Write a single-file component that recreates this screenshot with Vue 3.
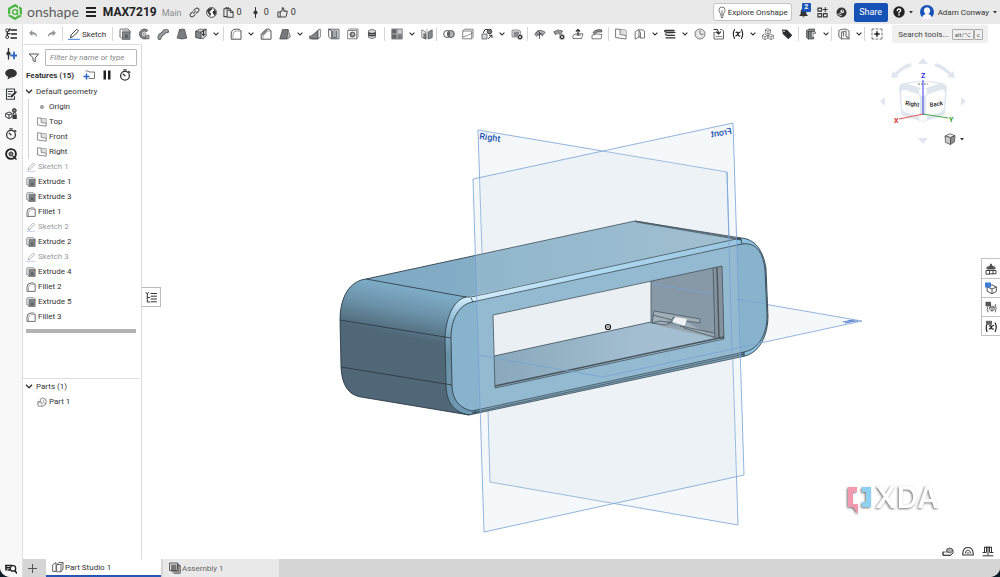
<script setup>
import { h, ref } from 'vue'

const dark = '#3a3d40'
const grey = '#6b6e71'

const s = (d, stroke = dark, w = 1, extra = {}) => ['path', { d, fill: 'none', stroke, 'stroke-width': w, 'stroke-linejoin': 'round', 'stroke-linecap': 'round', ...extra }]
const f = (d, fill = dark, stroke = 'none') => ['path', { d, fill, stroke, 'stroke-width': 0.7 }]
const c = (cx, cy, r, fill = 'none', stroke = dark, w = 1) => ['circle', { cx, cy, r, fill, stroke, 'stroke-width': w }]

const fx = s('M2.5 1.5Q.2 6 2.5 10.5M9.5 1.5Q11.8 6 9.5 10.5', '#222', 1.1)
const ex = s('M4 4.4Q5.5 3.4 6 6T8 8M8.3 4Q6.5 4.5 5.8 6T3.8 8', '#222', 1.2)
const miniDelete = [c(9, 9, 2.8, '#333', '#fff', 0.5), s('M8 8L10 10M10 8L8 10', '#fff', 0.7)]

const icons = {
  tree: [c(2.2, 2.3, 1.5), c(2.2, 9, 1.5), s('M2.2 4V7.5M2.5 5.7H5M6 2H11.5M6.5 6H11.5M6 10H11.5M5 .8L3.8 3', '#222', 1.3)],
  insertVersion: [s('M3.5 0V11', '#333', 1.3), c(3.5, 5.5, 1.7, '#333'), s('M9 4.5V10.5M6 7.5H12', '#2f66c4', 1.8)],
  comment: [f('M6 1C9 1 11.8 2.7 11.8 5.2S9 9.4 6 9.4L2.5 11.5 3.2 8.8C1.5 8 .2 6.8 .2 5.2.2 2.7 3 1 6 1Z', '#333')],
  notes: [s('M9.5 3.5V1H1.5V11.3H9.5V8.5M3.2 3.5H7.5M3.2 6H6M3.2 8.5H5', dark, 1.1), s('M6.5 8.5L10.8 4.2', '#222', 1.8)],
  config: [s('M1 5.5L4 4L7 5.5V9L4 10.5L1 9ZM1 5.5L4 7L7 5.5M4 7V10.5'), c(9.3, 2.5, 1.9, '#777', '#333'), f('M7.5 6.5H11.8V11H7.5Z'), s('M8.5 6V5Q9.6 4 10.8 5V6')],
  timer: [c(6, 6.7, 4.4, 'none', '#333', 1.3), s('M6 6.8L4.2 5.2M4.8 .8H7.2M9.8 2.4L10.8 3.3', '#333', 1.3)],
  target: [c(6, 6, 4.9, '#fff', '#222', 1.9), c(6, 6, 2.1, '#777', '#333'), s('M8.5 8.5L11 11', '#222', 1.6)],
  inspect: [s('M.6 3.5H7M1 5.8H4.5M1 3.5V8M3 8H5', '#222', 1.6), c(8, 6.4, 2.7, '#fff', '#222', 1.3), s('M10 8.8L11.6 11', '#222', 1.6)],
  undo: [f('M2 5L5.3 2V4.1C8.5 4.2 10.2 6 10.2 9.5C9 7.3 7.5 6.3 5.3 6.2V8.2Z', '#94979a')],
  redo: [f('M10 5L6.7 2V4.1C3.5 4.2 1.8 6 1.8 9.5C3 7.3 4.5 6.3 6.7 6.2V8.2Z', '#94979a')],
  pencil: [s('M2.5 9.3L3.3 6.7L8.8 1.2L10.6 3L5 8.5Z'), s('M.5 11.3H11.5', '#3c79d8')],
  sketch: [s('M2.5 9.3L3.3 6.7L8.8 1.2L10.6 3L5 8.5Z', '#a5a7aa'), s('M1 11.3H10.5', '#b7cdf0')],
  extrude: [s('M1 8.5V2Q1 1 2 1H9L11 3', grey), s('M1 8.5L3.5 11', grey), f('M3.5 4H11V11.4H3.5Z', '#85888b', '#555'), s('M3.5 3H11V4.5', grey), f('M5.8 6.5H8.8V10H5.8Z', '#5c5f62')],
  revolve: [f('M9.8 2.3A5 5 0 1 0 9.8 9.7L8.2 8A2.8 2.8 0 1 1 8.2 4Z', '#85888b', '#444'), c(6.3, 6, 1.2, 'none', '#666', 0.8), f('M7.8 7.3H11V10.8H7.8Z', '#a6a8ab', '#555')],
  sweep: [s('M2.5 10C2.5 5 6.5 7.5 7.5 3.2H10', '#4f5254', 4), s('M2.5 10C2.5 5 6.5 7.5 7.5 3.2H10', '#9a9da0', 2.4)],
  loft: [f('M3.5 1.5H8.5L10.8 10Q6 12 1.2 10Z', '#7b7e81', '#444'), f('M3.5 1.5Q6 .5 8.5 1.5Q6 3 3.5 1.5Z', '#bbb', '#555')],
  thicken: [f('M.8 3L4.5 1.2H11.2V8L8 10.8L.8 9.5Z', '#c5c7c9', '#444'), f('M.8 3.3L6 4.2V10.6L.8 9.5Z', '#85888b', '#444'), s('M8.5 3V7.5M7 6L8.5 7.5 10 6M6 4.2L11 1.5', '#333')],
  fillet: [s('M1.2 10.8V6Q1.2 1.2 6 1.2H9L11 3V10.8Z', '#555'), s('M3 10.8V6.8Q3 3 6.8 3H11', '#888', 0.8)],
  chamfer: [s('M1.2 10.8V6.2L6 1.2H9.5L11 3V10.8Z', '#555'), f('M1.2 6.2L6 1.2 7.6 2.8 3 7.8Z', '#85888b'), s('M3 10.8V7.8L7.6 3H11', '#888', 0.8)],
  draft: [f('M3.5 1.5H9L8 11H.8Z', '#777a7d', '#444'), f('M9 1.5L11.4 9 8 11Z', '#bcbec0', '#555')],
  rib: [f('M.8 9L9 2.5V10.8H3Z', '#828588', '#444'), f('M9 2L11.3 1.2V9L9 10.8Z', '#fff', '#444'), s('M.8 8V10.8H9', '#555')],
  shell: [s('M1 1.2H11V10.8H3L1 9Z', '#666'), f('M3 2.5H9.5V10.8H3Z', '#74777a'), f('M5 2.5H8V9H5Z', '#a5a8ab'), s('M1 1.2L3 2.5')],
  hole: [s('M1 2.5L2.5 1H11V9.5L9.7 10.8H1ZM1 2.5H9.7V10.8', '#777', 0.9), c(5.5, 6.6, 2.5, '#888', '#555'), c(6, 6, 0.9, '#ccc', 'none')],
  thread: [f('M2.5 2.5Q6 .2 9.5 2.5V9.5Q6 11.8 2.5 9.5Z', '#d4d6d8', '#555'), s('M2.7 5Q6 6.4 9.3 5M2.7 7Q6 8.4 9.3 7', '#444', 1.6)],
  pattern: [f('M.8 1H11.2V11H.8Z', '#a5a8aa', '#555'), f('M1.2 1.4H5.3V5.3H1.2ZM1.2 6.6H5.3V10.6H1.2Z', '#606366'), f('M6.8 6.6H10.8V10.6H6.8Z', '#77797c'), f('M6.8 1.6H10.8V5.3H6.8Z', '#c7c9cb')],
  mirror: [f('M.8 1.8L4.8 4V11L.8 9.5Z', '#f4f4f4', '#555'), f('M7.2 4L11.2 1.8V9.5L7.2 11Z', '#8a8d90', '#444'), s('M6 1V11', '#999', 0.8), f('M2.8 5.5L4.8 6.5V11L2.8 10Z', '#888', '#555')],
  boolean: [c(4.2, 6, 3.5, '#fff', '#555'), c(7.8, 6, 3.5, '#aeb0b3', '#555'), f('M6 3Q8 6 6 9Q4 6 6 3Z', '#555')],
  split: [s('M1 3L2.5 1.2H11V9.3L9.7 10.8H1ZM1 3H9.7V10.8', '#777', 0.9), s('M1.5 8.8Q5 8.5 10.5 4.8', '#777', 0.8)],
  transform: [f('M1 6H6V11H1Z', '#d8d9db', '#444'), s('M2.5 4.5L4 1.5H7', '#333'), c(8.5, 3.5, 2.3, '#777', '#444'), s('M7.5 10.5L11 7.3M8.5 7.3H11V9.5', '#333')],
  deleteFace: [f('M1 2H7.5L9.5 3V9H1Z', '#cfd1d3', '#777'), f('M2.8 3.8H8V9H2.8Z', '#85888b'), ...miniDelete],
  moveFace: [f('M.8 6.5Q4 -.5 11.2 4.2L9 7Q6 3.8 2.8 8.5Z', '#aaacaf', '#555'), s('M4 3L7.5 7M5.5 5V10.5M5.5 5L8.8 8.2M2.5 4.6L4.5 7', '#444', 0.9)],
  deleteSurf: [f('M.8 3.8Q5 .5 9.5 3L7.8 7Q4 4.5 2.5 6.8Z', '#85888b', '#555'), s('M3 3.4L6 6M6 2.4L8.5 5', '#ddd', 0.6), ...miniDelete],
  exportFace: [f('M1 7.5L3.5 5.8H11L9.5 10.5H1Z', '#fff', '#444'), f('M2.5 7.2L4.5 6.2H9.5L8 8Z', '#999'), s('M6 7V1.5M4.2 3.2L6 1.5 7.8 3.2', '#333', 1.2)],
  offset: [f('M1 7.2Q5 5 11 6.5L10 10.8H1Z', '#fff', '#444'), f('M1.8 4.6Q5 .8 10.5 1.8L11 4Q6 3 3.5 5.8Z', '#85888b', '#444')],
  plane: [s('M1 1L11 2.2V11L1 9.6Z', '#777'), f('M5 1.6L11 2.3V7.6L5 6.6Z', '#dcdee0'), s('M5 1.6V6.6L11 7.5', '#777', 0.9)],
  surface: [s('M1.5 3.5L5 1.2V9L1.5 11Z', '#777'), s('M5.5 2Q10.5 1 10.5 4V10H6.5V5Q6.5 3 4.8 3.5', '#777'), s('M6.5 10Q5 10 5 8', '#777')],
  helix: [s('M1 2.5H10M1.5 2.5Q-.5 4 3 4.3H11M2 6Q1 7.3 4 7.3H10.5M2 9.8H11', '#333', 1.3), s('M1 5.8H9', '#999', 0.8)],
  clock: [c(6, 6, 5, '#f4f4f4', '#777'), s('M6 3V6.2H9', '#666'), c(6, 6, 3.4, 'none', '#bbb', 0.6)],
  derive: [s('M1 4.5V11H10.5V3L9 1.5H7.5', '#666'), s('M1 1.5H4Q5 1.5 5.5 5.5M3.5 4L5.5 6 7.5 4', '#333', 1.2), s('M3 8.5H9M1 4.5H2.5', '#888')],
  variable: [fx, ex],
  cubes: [s('M6 .8L8.5 2V4.8L6 6L3.5 4.8V2ZM3 6.2L5.7 7.5V10.3L3 11.5.5 10.3V7.5ZM9 6.2L11.5 7.5V10.3L9 11.5 6.3 10.3V7.5ZM3.5 2L6 3.2 8.5 2M6 3.2V6M.5 7.5L3 8.7 5.7 7.5M3 8.7V11.5M6.3 7.5L9 8.7 11.5 7.5M9 8.7V11.5', '#666', 0.7)],
  tag: [f('M1 1.5L6 1.8 11.3 7.3 7.3 11.2 1.8 6Z', '#2c2e30'), c(3, 3.3, 0.8, '#fff', 'none')],
  sheet: [f('M1.5 2.5L4 1H9.5V3.5H6V9H8.5V11H3.5L1.5 9.5Z', '#85888b', '#444'), s('M3.5 3.5V11M3.5 3.5H6', '#444', 0.8), f('M6.5 4H10.5V5.5H8V9.5H6.5Z', '#fff', '#555')],
  flat: [s('M1.2 2.5L4 1.2H8.5L11 3V10.8H3.5L1.2 9Z', '#666'), s('M3.5 10.8V4L8 3V8L11 10.8M5.5 3.5V8', '#777', 1.2)],
  addTool: [s('M1 3V1H3M9 1H11V3M11 9V11H9M3 11H1V9M5 1H7M5 11H7M1 5V7M11 5V7', '#666', 0.9), s('M6 3.8V8.2M3.8 6H8.2', '#222', 1.5)],
  filter: [s('M1.5 2H10.5L7.2 6V10L5 8.7V6Z', '#555')],
  folder: [s('M3 2H5L6 3H11.5V9.5H6', '#666', 0.9), s('M3.5 5V10M1 7.5H6', '#2f66c4', 1.5)],
  pause: [f('M2.5 1.5H5V10.5H2.5ZM7 1.5H9.5V10.5H7Z', '#222')],
  origin: [c(6, 6, 2, '#aaa', '#999', 1)],
  part: [s('M1 8V5.5H4V2.5L6.5 1 10.8 3V8.5L7 11H2Z', '#777'), s('M4 5.5L6 7H1.3M6 7V10.5M8 3.5V7L10 8', '#888', 0.8)],
  studio: [s('M1 3.5L4 1.5V10.5H1ZM5 3.5L7 1.5H11V8L9 10.8H5ZM9 3.8V10.8M5 3.5H9L11 1.5', '#666')],
  assembly: [s('M1 1H8.5V8.5H1ZM8.5 2H9.8V9.8H3M9.8 3.5H11.2V11.2H5', '#555'), f('M2 2.5H7.5V8H2Z', '#777')],
  outline: [s('M1 1.5L2.3 3 3.6 1.5M2.3 3V11H4.5M2.3 6.5H4.5M6 2.5H11.5M6 5.2H11.5M6 8H11.5M6 10.8H11.5', '#333', 1)],
  link: [s('M5 7L7.2 4.8M5.2 3.8L7.4 1.7Q8.8 .6 10.2 1.9T10.3 4.6L8.2 6.7M6.8 8.2L4.7 10.3Q3.2 11.4 1.8 10.1T1.7 7.4L3.8 5.3', '#444', 1.1)],
  globe: [c(6, 6, 5.3, '#fff', '#333'), f('M1 4.2Q2.8 .8 6 1L7.2 2.6 5.2 3.4 4.8 5 3 5.3 5 6.6 5.6 8 4.2 10.2 3.2 8.2ZM8 1.6L10.6 4 11 7 9.2 9.5 8.2 7.5 7 6.3 7.8 4.4 9 4Z', '#333')],
  copy: [s('M4 10.5H1V1.8H8V3.3M3 1.8V.8H6V1.8M4.5 3.5H8.5L11 5.5V11.3H4.5Z', '#444', 1.1), s('M8 3.5V6H11', '#444')],
  version: [s('M6 .5V11.5', '#333', 1.1), c(6, 6, 1.8, '#333')],
  like: [s('M1 5.5H3.5V11H1ZM3.5 5.8L5.8 3.5V.9Q7.8 .6 7.5 4.5H10.3Q11.4 4.6 11 6L10 10Q9.6 11 8.5 11H3.5', '#444', 1.1)],
  bulb: [s('M4.5 8.5C4.5 6.5 3 6 3 3.8Q3 1 6 1T9 3.8C9 6 7.5 6.5 7.5 8.5ZM4.7 10H7.3M5.3 11.5H6.7M6 8V4.5', '#777')],
  bell: [f('M2 9C3 8 3 6.5 3 5Q3 2 6 1.5T9 5C9 6.5 9 8 10.5 9V9.8H1.5V9ZM4.5 10.3H7.5Q6 12.2 4.5 10.3Z', '#333')],
  apps: [s('M1 1.2H5V4.5H1ZM1 7.2H5V10.8H1ZM7 7.2H11V10.8H7ZM9 .6V5M6.8 2.8H11.2', '#333', 1.2)],
  learn: [c(6, 6, 5.4, '#333', 'none'), s('M2 8L5 7M3 10L6 9', '#e9e9e9', 1), c(6.8, 4.8, 2, '#e9e9e9', 'none'), c(7.2, 4.4, 0.8, '#333', 'none')],
  help: [c(6, 6, 5.7, '#222', 'none'), s('M4.3 4.7Q4.3 3 6 3T7.7 4.6Q7.7 5.4 6 6.3V7', '#fff', 1.3), c(6, 8.9, 0.8, '#fff', 'none')],
  massA: [f('M3 6L6 .8 9 6Z', '#555', '#333'), f('M2 6Q1 3.5 3.5 3.5L4 6ZM10 6Q11 3.5 8.5 3.5L8 6Z', '#888', '#444'), s('M1 10.8V7.5H4.5V10.8ZM4.5 7.5H8V10.8H4.5M8 7.5H11V10.8H8', '#444')],
  appearance: [s('M2.5 5L7 2.8 11.3 5V9.5L7 11.7 2.5 9.5ZM2.5 5L7 7 11.3 5M7 7V11.7', '#555'), f('M0 .5H6V5.5H0Z', '#3f7bd3')],
  configTable: [s('M2.5 6Q1.5 8 3 11M10.3 3.5Q12 7.5 10.3 11M5 6L7 5 9.2 6V8.7L7 10 5 8.7ZM5 6L7 7.2 9.2 6M7 7.2V10', '#555', 0.9), f('M.5 .8H6V5.3H.5Z', '#555')],
  varTable: [s('M2 4Q.5 8 2 11.5M10.2 3Q12.3 7 10.2 11.5', '#222', 1.2), s('M4.5 6Q6 5 6.4 7.3T8.3 9M8.5 5.5Q7 6 6.2 7.3T4.3 9', '#222', 1.3), f('M1 .8H7V4.8H1Z', '#666')],
  measure: [f('M1 7H6.5L11 5V8L8.5 10.3H1Z', '#fff', '#333'), s('M1 7V10.3H8.5L11 8', '#333'), f('M4.5 6.5Q4 3 7.5 3T11 6L8.5 8Z', '#aaa', '#333')],
  gauge: [s('M.8 10V8Q1.5 2.5 6 2.5T11.2 8V10Z', '#333', 1.1), s('M3.2 8Q4 5 6 5T8.8 8M5 8H7', '#444', 1)],
  balance: [s('M1 10.8H11M6 2V10M2.5 2.3H9.5M2.5 2.3V7.5M9.5 2.3V7.5M1 7.5H4M8 7.5H11M4.5 2V7M7.5 2V7', '#333', 1)],
  smallCube: [f('M6 .8L11 2.6 6.5 4.6 1 3Z', '#eee', '#444'), f('M1 3L6.5 4.6V11.5L1.5 9.4Z', '#c9c9c9', '#444'), f('M11 2.6L6.5 4.6V11.5L10.5 8.8Z', '#909090', '#444')],
}

const Icon = (props) =>
  h('svg', { class: 'icon', viewBox: '0 0 12 12', 'aria-hidden': 'true' }, icons[props.name].map(([tag, attrs]) => h(tag, attrs)))
Icon.props = ['name']

const Chevron = () =>
  h('svg', { class: 'chevron', viewBox: '0 0 6 4', 'aria-hidden': 'true' }, [h('path', { d: 'M.6 .6L3 3L5.4 .6', fill: 'none', stroke: '#333', 'stroke-width': 1.1 })])

const Caret = () => h('svg', { class: 'caret', viewBox: '0 0 4 3', 'aria-hidden': 'true' }, [h('path', { d: 'M0 0H4L2 2.6Z', fill: '#333' })])

const toolGroups = [
  ['extrude', 'revolve', 'sweep', 'loft', 'thicken', 'v'],
  ['fillet', 'v', 'chamfer', 'draft', 'v', 'rib', 'shell', 'hole', 'thread'],
  ['pattern', 'v', 'mirror'],
  ['boolean', 'split', 'transform', 'v', 'deleteFace'],
  ['moveFace', 'deleteSurf', 'exportFace', 'offset'],
  ['plane', 'surface', 'v', 'helix', 'v', 'clock', 'derive', 'variable', 'v', 'cubes', 'tag'],
  ['sheet', 'v'],
  ['flat', 'v'],
  ['addTool'],
]

const railItems = ['insertVersion', 'comment', 'notes', 'config', 'timer', 'target']
const geometry = [['origin', 'Origin'], ['plane', 'Top'], ['plane', 'Front'], ['plane', 'Right']]
const features = [
  ['sketch', 'Sketch 1'], ['extrude', 'Extrude 1'], ['extrude', 'Extrude 3'], ['fillet', 'Fillet 1'],
  ['sketch', 'Sketch 2'], ['extrude', 'Extrude 2'], ['sketch', 'Sketch 3'], ['extrude', 'Extrude 4'],
  ['fillet', 'Fillet 2'], ['extrude', 'Extrude 5'], ['fillet', 'Fillet 3'],
]
const sideTabs = ['massA', 'appearance', 'configTable', 'varTable']
const filterText = ref('')
const toolQuery = ref('')
</script>

<template>
  <div class="app">
    <header class="topbar">
      <svg class="logo" viewBox="0 0 16 16" aria-hidden="true">
        <path d="M8 1.3L13.8 4.6V11.4L8 14.7L2.2 11.4V4.6Z" fill="none" stroke="#45b53c" stroke-width="2.2" />
        <path d="M1 11.2L4.4 9.4M11.5 1.5V4.8M15 11.5L11.8 9.9" stroke="#e8e8e8" stroke-width="1" />
        <circle cx="8" cy="8" r="2.4" fill="none" stroke="#45b53c" stroke-width="1.3" />
        <path d="M10.5 5.5V11.5" stroke="#45b53c" stroke-width="1.2" />
      </svg>
      <span class="brand">onshape</span>
      <button class="burger" aria-label="Menu"><i></i><i></i><i></i></button>
      <h1>MAX7219</h1>
      <span class="branch">Main</span>
      <button class="head-btn" aria-label="Copy link"><Icon name="link" /></button>
      <button class="head-btn" aria-label="Public document"><Icon name="globe" /></button>
      <button class="count" aria-label="Copies"><Icon name="copy" /><span>0</span></button>
      <button class="count" aria-label="Versions"><Icon name="version" /><span>0</span></button>
      <button class="count" aria-label="Likes"><Icon name="like" /><span>0</span></button>
      <div class="account">
        <button class="explore"><Icon name="bulb" />Explore Onshape</button>
        <button class="head-btn bell" aria-label="Notifications"><Icon name="bell" /><span class="badge">2</span></button>
        <button class="head-btn" aria-label="Apps"><Icon name="apps" /></button>
        <button class="head-btn" aria-label="Learning"><Icon name="learn" /></button>
        <button class="share">Share</button>
        <button class="help" aria-label="Help"><Icon name="help" /><Caret /></button>
        <button class="user">
          <svg class="avatar" viewBox="0 0 14 14" aria-hidden="true">
            <circle cx="7" cy="7" r="7" fill="#1b54b8" />
            <path d="M1.8 13Q3 9.5 5.5 9Q3.5 7.5 3.8 5Q4.3 2.4 7 2.3Q9.7 2.4 10.2 5Q10.5 7.5 8.5 9Q11 9.5 12.2 13L11 14H3Z" fill="#f6f8fb" />
          </svg>
          <span>Adam Conway</span><Caret />
        </button>
      </div>
    </header>

    <div class="body">
      <nav class="rail" aria-label="Panels">
        <button class="rail-btn first" aria-label="Feature tree"><Icon name="tree" /></button>
        <button v-for="r in railItems" :key="r" class="rail-btn" :aria-label="r"><Icon :name="r" /></button>
        <button class="rail-btn last" aria-label="Tab manager"><Icon name="inspect" /></button>
      </nav>

      <div class="column">
        <div class="toolbar">
          <div class="group history">
            <button class="tool" aria-label="Undo"><Icon name="undo" /></button>
            <button class="tool" aria-label="Redo"><Icon name="redo" /></button>
          </div>
          <div class="group"><button class="sketch-btn"><Icon name="pencil" />Sketch</button></div>
          <div v-for="(g, i) in toolGroups" :key="i" class="group">
            <template v-for="(t, j) in g" :key="j">
              <button v-if="t === 'v'" class="more" aria-label="More tools"><Chevron /></button>
              <button v-else class="tool" :aria-label="t"><Icon :name="t" /></button>
            </template>
          </div>
          <div class="tool-search">
            <input v-model="toolQuery" type="text" placeholder="Search tools..." aria-label="Search tools" />
            <kbd>alt/⌥</kbd><kbd>c</kbd>
          </div>
        </div>

        <div class="workspace">
          <aside class="panel">
            <div class="filter">
              <Icon name="filter" />
              <input v-model="filterText" type="text" placeholder="Filter by name or type" aria-label="Filter by name or type" />
            </div>
            <div class="panel-head">
              <h2>Features (15)</h2>
              <button aria-label="Add folder"><Icon name="folder" /></button>
              <button aria-label="Pause"><Icon name="pause" /></button>
              <button aria-label="Timing"><Icon name="timer" /></button>
            </div>
            <div class="features">
              <div class="row parent"><Chevron /><span>Default geometry</span></div>
              <ul class="nested">
                <li v-for="[icon, name] in geometry" :key="name" class="row"><Icon :name="icon" /><span>{{ name }}</span></li>
              </ul>
              <ul>
                <li v-for="[icon, name] in features" :key="name" class="row" :class="{ muted: icon === 'sketch' }">
                  <Icon :name="icon" /><span>{{ name }}</span>
                </li>
              </ul>
              <div class="rollback"></div>
            </div>
            <div class="parts">
              <div class="row parent"><Chevron /><span>Parts (1)</span></div>
              <ul>
                <li class="row child"><Icon name="part" /><span>Part 1</span></li>
              </ul>
            </div>
          </aside>

          <main class="viewport">
            <svg class="scene" viewBox="142 44 858 515" role="img" aria-label="Enclosure model">
              <defs>
                <linearGradient id="side" x1="390" y1="284" x2="380" y2="332" gradientUnits="userSpaceOnUse">
                  <stop offset="0" stop-color="#7eacc7" />
                  <stop offset=".45" stop-color="#6c93aa" />
                  <stop offset="1" stop-color="#4f6777" />
                </linearGradient>
                <linearGradient id="top" x1="370" y1="0" x2="740" y2="0" gradientUnits="userSpaceOnUse">
                  <stop offset="0" stop-color="#7da9c4" />
                  <stop offset="1" stop-color="#98bacd" />
                </linearGradient>
                <linearGradient id="rim" x1="0" y1="297" x2="0" y2="412" gradientUnits="userSpaceOnUse">
                  <stop offset="0" stop-color="#d3efff" />
                  <stop offset=".2" stop-color="#8fb9d2" />
                  <stop offset=".5" stop-color="#6990a7" />
                  <stop offset="1" stop-color="#6f9ab3" />
                </linearGradient>
                <linearGradient id="edge" x1="470" y1="0" x2="745" y2="0" gradientUnits="userSpaceOnUse">
                  <stop offset="0" stop-color="#d5f1ff" />
                  <stop offset=".4" stop-color="#addcf7" />
                  <stop offset="1" stop-color="#8ec0df" />
                </linearGradient>
                <linearGradient id="floor" x1="494" y1="0" x2="640" y2="0" gradientUnits="userSpaceOnUse">
                  <stop offset="0" stop-color="#7a9db2" />
                  <stop offset="1" stop-color="#9bb9cd" />
                </linearGradient>
              </defs>

              <path class="plane-fill" d="M478 130L727 172L738 525L490 482Z" />
              <path class="plane-line" d="M482 253L478 130L727 172L738 525L490 482L488 410" />
              <path class="plane-fill" d="M735 299L862 321L740 347Z" />
              <path class="plane-line" d="M735 299L862 321" />

              <path d="M366 279C349 281 340 298 340 320L341 367C342 386 349 395 361 397L469 415L745 356C760 352 768 335 768 316L766 268C763 250 755 239 741 238L635 221Z" fill="#6b91a8" />
              <path d="M366 279L635 221L741 238L471 297H466Z" fill="url(#top)" />
              <path d="M366 279C349 281 340 298 340 320L341 367C342 386 349 395 361 397L469 415C453 412 446 401 446 384L445 338C446 316 454 300 466 297Z" fill="url(#side)" />
              <path d="M466 297C454 300 446 316 445 338L446 384C446 401 453 412 469 415L474 413L472 411C458 408 452 398 452 385L451 338C451 319 459 305 472 302L471 297Z" fill="url(#rim)" />
              <path d="M467 297L741 238C755 239 763 250 766 268L768 316C768 335 760 352 745 356L740 352L742 244L472 302Z" fill="url(#edge)" />
              <path fill-rule="evenodd" d="M472 302C459 305 451 319 451 338L452 385C452 398 458 408 472 411L744 352C759 349 767 334 767 316L765 270C763 252 756 242 742 244ZM493 315L722 266L724 339L495 388Z" fill="#88b3cd" />
              <path d="M472 411L744 352L745 356L469 415Z" fill="#6b98b2" />

              <path d="M493 315L651 281V322L494 356Z" fill="#f0f4f6" />
              <path d="M651 281L722 266L724 339L714 338L651 322Z" fill="#788a98" />
              <path d="M494 356L651 322L714 338L724 339L495 388Z" fill="url(#floor)" />
              <path d="M713 268L722 266L724 339L715 339Z" fill="#73828f" />
              <path d="M717 267L719 338" stroke="#313b42" stroke-width="1.5" />
              <path d="M495 386L724 337" class="ink heavy" />
              <path d="M651 322L714 333V338L660 326Z" fill="#8d9ba6" />
              <path d="M654 311L700 319V323L687 321L673 317V323L660 321L652 323ZM651 323L666 325L673 320M653 315L672 320M680 326L714 333M686 322L684 328L714 337" fill="#98a5af" class="detail" />
              <path d="M675 317L687 319L685 326L672 322Z" fill="#f7f8f8" />

              <path class="ink" d="M366 279L635 221L741 238C755 239 763 250 766 268L768 316C768 335 760 352 745 356L469 415L361 397C349 395 342 386 341 367L340 320C340 298 349 281 366 279Z" />
              <path class="ink" d="M366 279L466 297C454 300 446 316 445 338L446 384C446 401 453 412 469 415M466 297H471L741 238M635 221L741 239M636 222L741 240" />
              <path class="ink" d="M472 302C459 305 451 319 451 338L452 385C452 398 458 408 472 411L744 352C759 349 767 334 767 316L765 270C763 252 756 242 742 244ZM471 298L473 302M475 411V414M741 239L742 244M340 320L451 338M341 367L452 385M765 269H766M767 316H768M744 352V356M472 413L744 354" />
              <path class="ink" d="M493 315L722 266L724 339L495 388ZM494 356L651 322M651 281V322M713 268L715 339" />

              <path class="plane-fill" d="M473 179L733 123L744 475L484 532Z" />
              <path class="plane-line" d="M473 179L733 123L744 475L484 532Z" />
              <path class="plane-line" d="M727 172L732 353" />
              <path class="plane-line" d="M652 284L713 294M735 299L767 304M862 321L603 377L478 355" />
              <path d="M843 322L853 320M845 323L855 321M848 321L858 321" stroke="#5d83cf" stroke-width="1" />
              <circle cx="608" cy="327" r="2.5" fill="#fff" stroke="#111" stroke-width="1.2" />
              <circle cx="608" cy="327" r=".8" fill="#111" />
              <text class="plane-name" transform="translate(479 139) rotate(8)">Right</text>
              <text class="plane-name" transform="translate(732 134) rotate(-9) scale(-1 1)">Front</text>
            </svg>

            <button class="outline-btn" aria-label="Feature list"><Icon name="outline" /></button>

            <div class="view-cube">
              <svg viewBox="0 0 90 92" role="img" aria-label="View cube">
                <g fill="#dfe6ee">
                  <path d="M44 2L49 8H39ZM1 45L6 41V50ZM87 45L82 41V50ZM44 88L39 82H49Z" />
                  <path d="M31 7L33 10Q24 13 18 19L20 21L12 22L14 15L16 17Q22 10 31 7ZM57 7L55 10Q64 13 70 19L68 21L76 22L74 15L72 17Q66 10 57 7Z" />
                  <path d="M25 27Q44 23 63 27Q68 28 68 32L66 56Q66 59 62 60L44 66L26 60Q22 59 22 56L20 32Q20 28 25 27Z" />
                </g>
                <path d="M28 28Q44 24 60 28Q52 30 44 33Q36 30 28 28ZM22 36Q23 33 27 34L38 38Q41 39 41 43V57Q41 61 38 60L26 56Q23 55 23 51ZM66 36Q65 33 61 34L50 38Q47 39 47 43V57Q47 61 50 60L62 56Q65 55 65 51Z" fill="#fff" />
                <ellipse cx="44" cy="36" rx="4" ry="4" fill="#fff" />
                <ellipse cx="44" cy="62" rx="4" ry="3" fill="#fff" />
                <path d="M39 28H49" stroke="#777" stroke-dasharray="2 1" />
                <path d="M44 24V59" stroke="#3b3fe0" />
                <path d="M44 58L20 63" stroke="#e25555" />
                <path d="M44 58L69 62" stroke="#4aa54a" />
                <text class="axis z" x="42" y="22">Z</text>
                <text class="axis x" x="15" y="67">X</text>
                <text class="axis y" x="70" y="66">Y</text>
                <text class="face" transform="translate(26 49) rotate(8)">Right</text>
                <text class="face" transform="translate(51 51) rotate(-8)">Back</text>
              </svg>
              <button aria-label="View options"><Icon name="smallCube" /><Caret /></button>
            </div>

            <div class="side-tabs">
              <button v-for="t in sideTabs" :key="t" :aria-label="t"><Icon :name="t" /></button>
            </div>

            <div class="watermark">
              <svg viewBox="0 0 26 30" aria-hidden="true">
                <path d="M1 1H10V6H6V18H11V28L6 21H1Z" fill="#f29bb0" />
                <path d="M15 1H24V21H15V16H19V6H15Z" fill="#8ed2f3" />
              </svg>
              <span>XDA</span>
            </div>

            <div class="measure">
              <button aria-label="Measure"><Icon name="measure" /></button>
              <button aria-label="Angle"><Icon name="gauge" /></button>
              <button aria-label="Mass properties"><Icon name="balance" /></button>
            </div>
          </main>
        </div>

        <footer class="tabs">
          <button class="add" aria-label="Add tab"></button>
          <button class="tab active"><Icon name="studio" />Part Studio 1</button>
          <button class="tab"><Icon name="assembly" />Assembly 1</button>
        </footer>
      </div>
    </div>
  </div>
</template>

<style>
html { background: #0b1d26; }
</style>

<style scoped>
.app, .app * { box-sizing: border-box; }
.app {
  min-height: 100vh; display: flex; flex-direction: column; overflow: hidden;
  background: #fff; color: #333; border-radius: 0 0 10px 10px;
  font: 8px/15px Roboto, "Noto Sans", sans-serif;
}
button { display: inline-flex; align-items: center; justify-content: center; border: 0; padding: 0; background: none; color: inherit; font: inherit; cursor: pointer; }
input { font: inherit; color: inherit; }
ul { list-style: none; margin: 0; padding: 0; }
h1, h2 { margin: 0; }
.icon { width: 12px; height: 12px; flex: none; display: block; }
.chevron { width: 6px; height: 4px; flex: none; display: block; }
.caret { width: 4px; height: 3px; flex: none; display: block; }

.topbar { height: 24px; display: flex; align-items: center; background: #e9e9e9; padding: 0 3px 0 7px; }
.logo { width: 16px; height: 16px; flex: none; }
.brand { font: 14px/20px Lato, sans-serif; color: #5c5f62; margin-left: 4px; }
.burger { flex-direction: column; gap: 2px; width: 10px; margin-left: 7px; }
.burger i { width: 10px; height: 2px; background: #222; }
.topbar h1 { font-size: 12px; font-weight: 700; color: #222; margin-left: 7px; }
.branch { font-size: 9px; color: #8b8d90; margin: 2px 7px 0 5px; }
.head-btn .icon, .count .icon { width: 11px; height: 11px; }
.head-btn { margin-right: 6px; position: relative; }
.count { gap: 3px; margin-right: 8px; font-size: 9px; }
.account { margin-left: auto; display: flex; align-items: center; }
.account .head-btn { margin-right: 8px; }
.explore { height: 18px; padding: 0 3px 0 2px; margin-right: 6px; background: #fff; border: 1px solid #c4c4c4; border-radius: 3px; white-space: nowrap; }
.badge { position: absolute; left: 4px; top: -4px; width: 9px; height: 9px; border-radius: 1px; background: #1b54b8; color: #fff; font-size: 7px; line-height: 9px; font-weight: 700; }
.share { width: 34px; height: 19px; margin: 0 5px 0 -1px; border-radius: 2px; background: #1651b5; color: #fff; font-size: 9px; }
.help { gap: 4px; margin-right: 7px; }
.user { gap: 4px; white-space: nowrap; }
.avatar { width: 14px; height: 14px; }

.body { flex: 1; display: flex; }
.rail { width: 23px; flex: none; display: flex; flex-direction: column; align-items: center; background: #f8f8f8; border-right: 1px solid #dedede; }
.rail-btn { width: 22px; height: 20px; }
.rail-btn.last { margin-top: auto; height: 18px; }
.column { flex: 1; min-width: 0; display: flex; flex-direction: column; }

.toolbar { height: 20px; display: flex; align-items: center; }
.group { height: 14px; display: flex; align-items: center; padding: 0 2px; border-right: 1px solid #d6d6d6; }
.group.history { padding: 0 1px 0 0; }
.tool { width: 19px; height: 18px; }
.more { width: 11px; height: 18px; }
.sketch-btn { gap: 2px; padding: 0 4px 0 3px; }
.group:nth-child(4) { padding-right: 3px; }
.group:nth-child(5) { padding-right: 0; }
.group:nth-child(6) { padding-right: 1px; }
.group:nth-last-child(-n+4) { padding-right: 0; }
.group:nth-last-child(2) { border-right: 0; }
.tool-search { flex: 1; min-width: 80px; height: 18px; margin: 0 12px 0 6px; display: flex; align-items: center; padding: 0 5px 0 6px; background: #f0f0f0; border-radius: 2px; }
.tool-search input { flex: 1; min-width: 0; width: 0; padding: 0; border: 0; background: none; font-size: 8px; outline: 0; }
.tool-search input::placeholder { color: #444; opacity: 1; }
kbd { border: 1px solid #aaa; border-radius: 1px; height: 11px; padding: 0 2px; font: 6px/9px Roboto, "DejaVu Sans", sans-serif; color: #555; }

.workspace { flex: 1; display: flex; min-height: 0; }
.panel { width: 119px; flex: none; display: flex; flex-direction: column; border-top: 1px solid #dedede; border-right: 1px solid #dadada; }
.filter { display: flex; align-items: center; gap: 5px; padding: 4px 4px 0 5px; }
.filter input { flex: 1; min-width: 0; height: 17px; border: 1px solid #b9b9b9; border-radius: 1px; padding: 0 4px; font-size: 8px; background: #fff; outline: 0; }
.filter input::placeholder { color: #858789; font-style: italic; opacity: 1; }
.panel-head { height: 18px; display: flex; align-items: center; padding-left: 3px; gap: 6px; }
.panel-head h2 { font-size: 8px; font-weight: 700; margin-right: 3px; }
.features { height: 295px; border-bottom: 1px solid #dedede; margin-right: 2px; }
.row { height: 15px; display: flex; align-items: center; gap: 2px; padding-left: 3px; white-space: nowrap; }
.row .icon { width: 10px; height: 10px; }
.row .chevron { width: 8px; height: 5px; }
.row.parent { gap: 3px; padding-left: 2px; }
.nested { margin-left: 5px; border-left: 1px solid #d5d5d5; }
.nested .row { padding-left: 8px; }
.row.child { padding-left: 14px; }
.muted { color: #9a9c9f; }
.rollback { height: 4px; margin: 5px 3px 0 3px; background: #b3b3b3; }

.viewport { flex: 1; min-width: 0; position: relative; display: flex; background: #fff; }
.scene { width: 100%; min-height: 515px; display: block; }
.ink { fill: none; stroke: #28363f; stroke-width: .8; stroke-linejoin: round; }
.ink.heavy { stroke-width: 1.6; }
.detail { stroke: #2c3840; stroke-width: .8; }
.plane-fill { fill: #cad8e2; opacity: .19; }
.plane-line { fill: none; stroke: #79a1d4; stroke-width: .8; }
.plane-name { font: 500 9px Roboto, sans-serif; fill: #2454b0; }

.outline-btn { position: absolute; left: 0; top: 243px; width: 19px; height: 20px; border: 1px solid #bbb; border-left: 0; background: #fff; }
.view-cube { position: absolute; right: 31px; top: 12px; width: 90px; display: flex; flex-direction: column; align-items: flex-end; }
.view-cube > svg { display: block; width: 90px; height: 92px; }
.view-cube button { gap: 4px; margin-top: -15px; margin-right: 5px; }
.axis { font: 700 7px Roboto, sans-serif; }
.axis.z { fill: #2929e6; }
.axis.x { fill: #e03434; }
.axis.y { fill: #299a29; }
.face { font: 500 6px Roboto, sans-serif; fill: #222; }
.side-tabs { position: absolute; right: 0; top: 214px; display: flex; flex-direction: column; border: 1px solid #c2c2c2; border-right: 0; background: #fff; }
.side-tabs button { width: 18px; height: 19px; }
.side-tabs button + button { border-top: 1px solid #c2c2c2; }
.watermark { position: absolute; right: 61px; bottom: 43px; display: flex; align-items: flex-start; gap: 2px; filter: drop-shadow(-1px 1px 1px #777); }
.watermark svg { width: 26px; height: 30px; }
.watermark span { font: 600 30px/22px Inter, sans-serif; color: #fff; }
.measure { position: absolute; right: 6px; bottom: 2px; display: flex; gap: 8px; }

.tabs { height: 18px; display: flex; align-items: stretch; background: #d5d5d5; }
.add { width: 19px; margin-right: 4px; position: relative; }
.add::before, .add::after { content: ""; position: absolute; background: #555; width: 9px; height: 1px; }
.add::after { transform: rotate(90deg); }
.tab { width: 116px; justify-content: flex-start; gap: 1px; padding-left: 6px; background: #e9e9e9; color: #666; }
.tab.active { width: 115px; margin-right: 2px; background: #fff; color: #333; border-bottom: 2px solid #2456b3; }
</style>
